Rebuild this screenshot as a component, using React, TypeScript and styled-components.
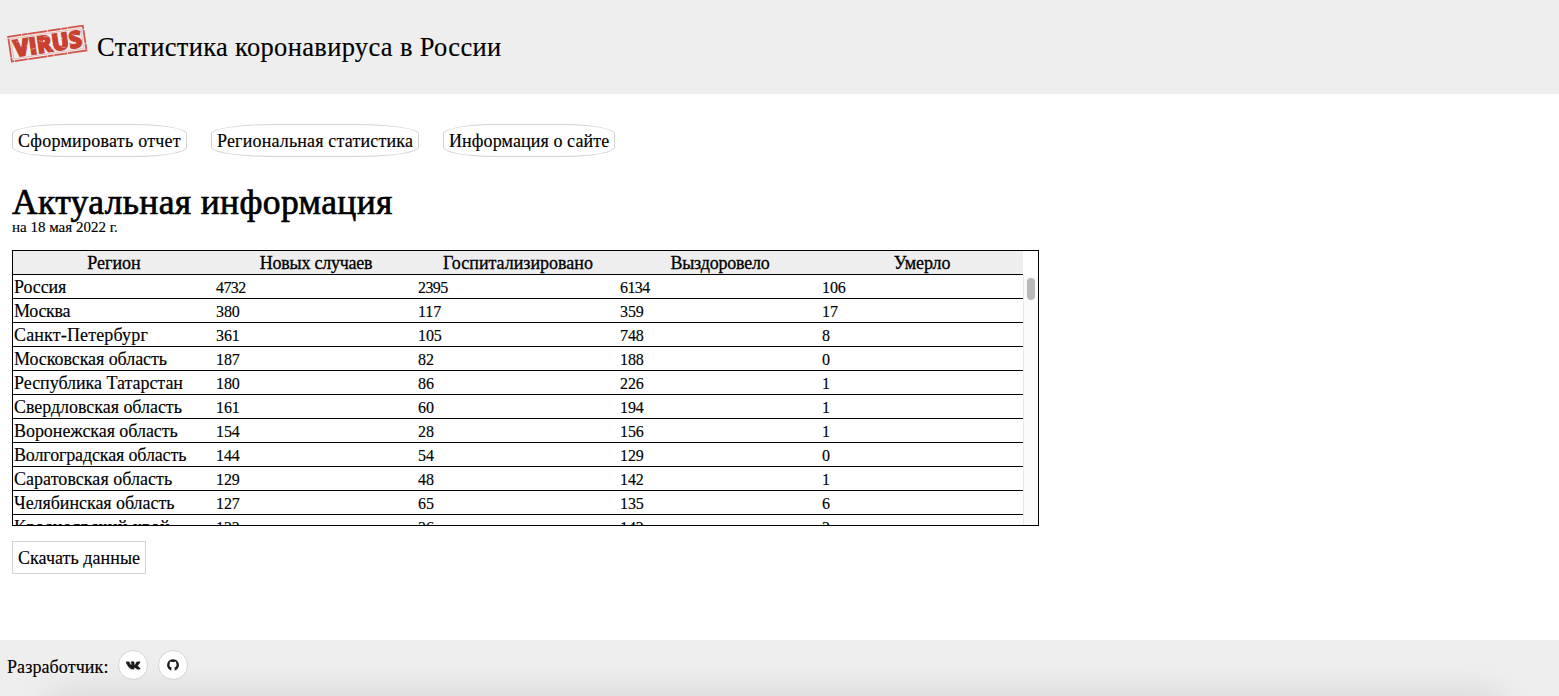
import React from "react";
import styled, { createGlobalStyle } from "styled-components";

const GlobalStyle = createGlobalStyle`
  * { box-sizing: border-box; }
  body {
    margin: 0;
    background: #fff;
    color: #000;
    font-family: "Liberation Serif", "DejaVu Serif", serif;
    font-size: 18px;
    -webkit-text-stroke: 0.15px #000;
  }
`;

const Page = styled.div`
  display: flex;
  flex-direction: column;
  height: 696px;
  overflow: hidden;
`;

const Header = styled.header`
  display: flex;
  align-items: center;
  height: 94px;
  padding-left: 4px;
  gap: 8px;
  background: #eee;
`;

const Stamp = styled.svg`
  display: block;
  width: 85px;
  height: 46px;
  margin-bottom: 6px;
  -webkit-text-stroke: 0;
`;

const SiteTitle = styled.div`
  font-size: 26.5px;
  line-height: 30px;
  letter-spacing: 0.33px;
  white-space: nowrap;
`;

const Main = styled.main`
  flex: 1;
  padding: 30px 12px 0;
`;

const Nav = styled.nav`
  display: flex;
  gap: 24px;
`;

const Button = styled.button<{ $width: number; $round?: boolean; $spacing?: number }>`
  width: ${(p) => p.$width}px;
  height: 33px;
  padding: 2px 0 0 5px;
  border: 1px solid #d3d3d3;
  border-radius: ${(p) => (p.$round ? "30%" : "0")};
  background: #fff;
  color: #000;
  font: inherit;
  letter-spacing: ${(p) => p.$spacing ?? 0}px;
  text-align: left;
  white-space: nowrap;
`;

const Heading = styled.h1`
  margin: 26px 0 0;
  font-size: 35.5px;
  font-weight: 400;
  line-height: 38px;
  letter-spacing: 0.37px;
  -webkit-text-stroke: 0.7px #000;
`;

const DateLine = styled.div`
  height: 15px;
  margin-bottom: 14px;
  font-size: 15px;
  line-height: 12px;
`;

const TableFrame = styled.section`
  width: 1027px;
  height: 276px;
  border: 1px solid #000;
  margin-bottom: 15px;
`;

const Row = styled.div<{ $head?: boolean }>`
  display: grid;
  grid-template-columns: repeat(5, 202px);
  width: 1010px;
  height: 24px;
  border-bottom: 1px solid #000;
  background: ${(p) => (p.$head ? "#eee" : "#fff")};
  text-align: ${(p) => (p.$head ? "center" : "left")};
  -webkit-text-stroke: ${(p) => (p.$head ? "0.3px #000" : "0.15px #000")};
`;

const Cell = styled.div<{ $numeric?: boolean; $spacing?: number }>`
  padding: 0 1px;
  font-size: ${(p) => (p.$numeric ? 16 : 18)}px;
  line-height: ${(p) => (p.$numeric ? 25 : 25)}px;
  height: 23px;
  white-space: nowrap;
  letter-spacing: ${(p) => p.$spacing ?? 0}px;
`;

const Scroller = styled.div`
  display: flex;
  height: 250px;
  overflow: hidden;
`;

const Track = styled.div`
  flex: 1;
  padding: 3px 0 0 3px;
  border-left: 1px solid #e8e8e8;
  background: #fafafa;
`;

const Thumb = styled.div`
  width: 8px;
  height: 22px;
  border-radius: 4px;
  background: #b9b9b9;
`;

const Footer = styled.footer`
  position: relative;
  display: flex;
  align-items: flex-start;
  height: 56px;
  padding: 10px 0 0 7px;
  background: #eee;
  overflow: hidden;
`;

const FooterShade = styled.div`
  position: absolute;
  left: 50px;
  right: 60px;
  top: 58px;
  height: 30px;
  box-shadow: 0 0 38px 2px rgba(0, 0, 0, 0.12);
`;

const FooterLabel = styled.span`
  width: 111px;
  line-height: 34px;
  letter-spacing: 0.1px;
  white-space: nowrap;
`;

const Social = styled.a`
  position: relative;
  display: flex;
  align-items: center;
  justify-content: center;
  width: 30px;
  height: 30px;
  margin-right: 10px;
  border: 1px solid #d3d3d3;
  border-radius: 50%;
  background: #fff;
`;

const COLUMNS = [
  { title: "Регион", spacing: 0 },
  { title: "Новых случаев", spacing: -0.25 },
  { title: "Госпитализировано", spacing: 0 },
  { title: "Выздоровело", spacing: -0.2 },
  { title: "Умерло", spacing: -0.1 },
];

const ROWS: { region: string; spacing: number; values: string[] }[] = [
  { region: "Россия", spacing: -0.1, values: ["4732", "2395", "6134", "106"] },
  { region: "Москва", spacing: -0.3, values: ["380", "117", "359", "17"] },
  { region: "Санкт-Петербург", spacing: 0.15, values: ["361", "105", "748", "8"] },
  { region: "Московская область", spacing: -0.07, values: ["187", "82", "188", "0"] },
  { region: "Республика Татарстан", spacing: -0.04, values: ["180", "86", "226", "1"] },
  { region: "Свердловская область", spacing: -0.04, values: ["161", "60", "194", "1"] },
  { region: "Воронежская область", spacing: -0.05, values: ["154", "28", "156", "1"] },
  { region: "Волгоградская область", spacing: -0.14, values: ["144", "54", "129", "0"] },
  { region: "Саратовская область", spacing: 0.04, values: ["129", "48", "142", "1"] },
  { region: "Челябинская область", spacing: -0.05, values: ["127", "65", "135", "6"] },
  { region: "Красноярский край", spacing: 0.45, values: ["122", "26", "142", "2"] },
];

function VirusStamp() {
  return (
    <Stamp viewBox="0 0 85 46" aria-label="VIRUS">
      <g transform="translate(3 15) rotate(-8.5)">
        <rect x="1" y="1" width="75.5" height="25" fill="none" stroke="#d0564a" strokeWidth="1.8" strokeDasharray="13 .7 6 .5 19 .8" />
        <rect x="3.4" y="3.4" width="70.6" height="20.2" fill="none" stroke="#dfa09a" strokeWidth=".6" />
        <text x="4.5" y="22" fontFamily="Open Sans, sans-serif" fontWeight="800" fontSize="23.5" textLength="69" lengthAdjust="spacingAndGlyphs" fill="#c9402f" stroke="#c9402f" strokeWidth="1.3">VIRUS</text>
        <path d="M8 7l6 1M22 17l5-1M31 9l3 2M41 20l4-3M50 8l5 3M60 18l7-2M64 8l5 2M17 12l3 3M36 6l6 1M26 20l3-2M52 19l4 1" stroke="#eee" strokeWidth=".7" opacity=".6" />
      </g>
    </Stamp>
  );
}

export default function App() {
  return (
    <Page>
      <GlobalStyle />
      <Header>
        <VirusStamp />
        <SiteTitle>Статистика коронавируса в России</SiteTitle>
      </Header>
      <Main>
        <Nav>
          <Button $round $width={175} $spacing={0.26}>Сформировать отчет</Button>
          <Button $round $width={208} $spacing={0.17}>Региональная статистика</Button>
          <Button $round $width={172} $spacing={0.1}>Информация о сайте</Button>
        </Nav>
        <Heading>Актуальная информация</Heading>
        <DateLine>на 18 мая 2022 г.</DateLine>
        <TableFrame>
          <Row $head>
            {COLUMNS.map((c) => (
              <Cell key={c.title} $spacing={c.spacing}>{c.title}</Cell>
            ))}
          </Row>
          <Scroller>
            <div>
              {ROWS.map((r) => (
                <Row key={r.region}>
                  <Cell $spacing={r.spacing}>{r.region}</Cell>
                  {r.values.map((v, i) => (
                    <Cell key={i} $numeric $spacing={v.length === 4 ? -0.6 : -0.1}>{v}</Cell>
                  ))}
                </Row>
              ))}
            </div>
            <Track>
              <Thumb />
            </Track>
          </Scroller>
        </TableFrame>
        <Button $width={134} $spacing={0.05}>Скачать данные</Button>
      </Main>
      <Footer>
        <FooterShade />
        <FooterLabel>Разработчик:</FooterLabel>
        <Social>
          <svg width="15" height="9" viewBox="0 0 15 9" fill="#1c1c1c" stroke="#1c1c1c" strokeWidth=".3">
            <path d="M.3.7h2.3c.5 0 .6.2.8.6.5 1.3 1.2 2.5 1.8 2.8.3.1.3-.3.3-1 0-1-.1-1.5-.8-1.8C5 .7 5.7.5 6.6.5c1.3 0 1.6.2 1.6 1.1v2c0 .6.3.5.5.3.7-.7 1.3-1.7 1.7-2.7.1-.3.3-.5.7-.5h2.5c.6 0 .6.3.4.7-.4 1-1.4 2.1-2.1 2.9-.2.3-.2.4 0 .7.7.7 1.7 1.6 2.3 2.5.2.4 0 .8-.5.8h-2.4c-.6 0-1.1-.6-1.7-1.2-.6-.6-1.4-.9-1.4 0 0 .8-.1 1.2-.8 1.2-3.2.2-5.4-2.4-7.3-6.8-.1-.4 0-.8.2-.8z" />
          </svg>
        </Social>
        <Social>
          <svg width="12" height="12" viewBox="0 0 12 12">
            <path d="M4.3 11.7V9.8C4.3 9.3 4.5 8.9 4.8 8.6C3.2 8.4 2.5 7.5 2.5 5.8C2.5 5.1 2.6 4.6 3 4.1C2.8 3.5 2.8 3 3 2.5C3.6 2.5 4.1 2.8 4.6 3.1Q6 2.8 7.4 3.1C7.9 2.8 8.4 2.5 9 2.5C9.2 3 9.2 3.5 9 4.1C9.4 4.6 9.5 5.1 9.5 5.8C9.5 7.5 8.8 8.4 7.2 8.6C7.5 8.9 7.7 9.3 7.7 9.8V11.7A5.9 5.9 0 1 0 4.3 11.7Z" fill="#1c1c1c" />
          </svg>
        </Social>
      </Footer>
    </Page>
  );
}
